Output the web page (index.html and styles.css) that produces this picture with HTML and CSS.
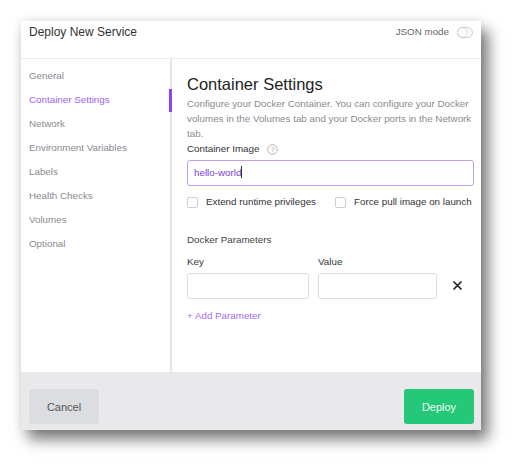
FILE: index.html
```html
<!DOCTYPE html>
<html>
<head>
<meta charset="utf-8">
<link rel="stylesheet" href="styles.css">
</head>
<body>
<div class="modal">
  <header class="header">
    <div class="title">Deploy New Service</div>
    <div class="json">
      <span>JSON mode</span>
      <span class="toggle"><span class="knob"></span></span>
    </div>
  </header>
  <div class="body">
    <nav class="sidebar">
      <div class="nav-item">General</div>
      <div class="nav-item active">Container Settings</div>
      <div class="nav-item">Network</div>
      <div class="nav-item">Environment Variables</div>
      <div class="nav-item">Labels</div>
      <div class="nav-item">Health Checks</div>
      <div class="nav-item">Volumes</div>
      <div class="nav-item">Optional</div>
    </nav>
    <main class="content">
      <h1 class="heading">Container Settings</h1>
      <p class="desc">Configure your Docker Container. You can configure your Docker volumes in the Volumes tab and your Docker ports in the Network tab.</p>
      <div class="label">Container Image
        <svg class="help" width="11" height="11" viewBox="0 0 11 11"><circle cx="5.5" cy="5.5" r="4.8" fill="none" stroke="#aaa" stroke-width="0.9"/><text x="5.5" y="8.2" font-size="7.5" text-anchor="middle" fill="#aaa" font-family="Liberation Sans, sans-serif">?</text></svg>
      </div>
      <div class="input focus">hello-world<span class="caret"></span></div>
      <div class="checks">
        <label class="check first"><span class="box"></span>Extend runtime privileges</label>
        <label class="check"><span class="box"></span>Force pull image on launch</label>
      </div>
      <div class="section">Docker Parameters</div>
      <div class="params">
        <div class="col key">
          <div class="label">Key</div>
          <div class="input"></div>
        </div>
        <div class="col val">
          <div class="label">Value</div>
          <div class="input"></div>
        </div>
        <svg class="remove" width="9" height="9" viewBox="0 0 9 9"><path d="M1 1 L8 8 M8 1 L1 8" stroke="#222" stroke-width="1.7" stroke-linecap="round"/></svg>
      </div>
      <div class="add">+ Add Parameter</div>
    </main>
  </div>
  <footer class="footer">
    <button class="btn cancel">Cancel</button>
    <button class="btn deploy">Deploy</button>
  </footer>
</div>
</body>
</html>
```

FILE: styles.css
```css
* { box-sizing: border-box; }
html, body { margin: 0; padding: 0; background: #fff; }
body {
  font-family: "Liberation Sans", Arial, sans-serif;
  padding: 21px;
  width: 523px;
  height: 472px;
  overflow: hidden;
}
.modal {
  width: 460px;
  height: 409px;
  background: #fff;
  display: flex;
  flex-direction: column;
  box-shadow: 7px 9px 14px rgba(0,0,0,0.55), -2px -2px 8px rgba(0,0,0,0.06);
}
.header {
  height: 38px;
  flex: none;
  border-bottom: 1px solid #ececef;
  display: flex;
  justify-content: space-between;
  padding: 4px 8px 0 8px;
}
.title {
  font-size: 12px;
  color: #333;
  line-height: 14px;
}
.json {
  display: flex;
  align-items: flex-start;
  font-size: 9.8px;
  color: #666;
  line-height: 14px;
  gap: 8px;
}
.toggle {
  width: 16px;
  height: 11px;
  border: 1px solid #cfcfd3;
  border-radius: 6px;
  margin-top: 2px;
  position: relative;
  background: #fafafa;
}
.knob {
  position: absolute;
  left: 0;
  top: 0;
  width: 9px;
  height: 9px;
  border-radius: 50%;
  background: #fff;
  box-shadow: 0 0 1px rgba(0,0,0,0.4);
}
.body {
  flex: 1;
  display: flex;
  min-height: 0;
}
.sidebar {
  width: 151px;
  flex: none;
  border-right: 2px solid #e6e6ea;
  padding-top: 5px;
}
.nav-item {
  height: 24px;
  line-height: 24px;
  padding-left: 8px;
  font-size: 9.8px;
  color: #8a8a8f;
  position: relative;
}
.nav-item.active {
  color: #9b63ee;
}
.nav-item.active::after {
  content: "";
  position: absolute;
  right: -2px;
  top: 1px;
  width: 3px;
  height: 23px;
  background: #9145f2;
}
.content {
  flex: 1;
  min-width: 0;
  padding: 15px 7px 0 15px;
}
.heading {
  margin: 0;
  font-size: 16.5px;
  font-weight: normal;
  color: #222;
  line-height: 20px;
}
.desc {
  margin: 2px 0 0 0;
  font-size: 9.8px;
  line-height: 15px;
  color: #8a8a90;
}
.label {
  font-size: 9.8px;
  color: #333;
  line-height: 14px;
  margin-top: 1px;
  display: flex;
  align-items: center;
  gap: 8px;
}
.help { display: block; }
.input {
  height: 26px;
  border: 1px solid #ddd;
  border-radius: 3px;
  margin-top: 4px;
  font-size: 9.8px;
  line-height: 24px;
  padding-left: 6px;
  color: #7b3fd6;
}
.input.focus {
  border-color: #c19cf5;
}
.caret {
  display: inline-block;
  width: 1px;
  height: 12px;
  background: #333;
  vertical-align: -2px;
}
.checks {
  display: flex;
  margin-top: 9px;
  white-space: nowrap;
}
.check {
  display: flex;
  align-items: center;
  font-size: 9.8px;
  color: #333;
  gap: 8px;
  line-height: 14px;
}
.check.first { margin-right: 19px; }
.box {
  width: 11px;
  height: 11px;
  border: 1px solid #cfcfd3;
  border-radius: 2px;
  background: #fff;
  flex: none;
}
.section {
  font-size: 9.8px;
  color: #444;
  margin-top: 24px;
  line-height: 14px;
}
.params {
  display: flex;
  align-items: flex-end;
  margin-top: 8px;
}
.col .label { margin-top: 0; }
.col .input { margin-top: 4px; }
.key { width: 122px; }
.val { width: 119px; margin-left: 9px; }
.remove { margin-left: 16px; margin-bottom: 9px; }
.add {
  margin-top: 10px;
  font-size: 9.8px;
  color: #a36ef0;
  line-height: 14px;
}
.footer {
  height: 58px;
  flex: none;
  background: #e9e9eb;
  display: flex;
  justify-content: space-between;
  padding: 17px 7px 0 8px;
}
.btn {
  width: 70px;
  height: 35px;
  border: none;
  border-radius: 3px;
  font-family: "Liberation Sans", Arial, sans-serif;
  font-size: 11px;
}
.cancel { background: #dcdde1; color: #555; }
.deploy { background: #25c878; color: #f2fff6; }
```
